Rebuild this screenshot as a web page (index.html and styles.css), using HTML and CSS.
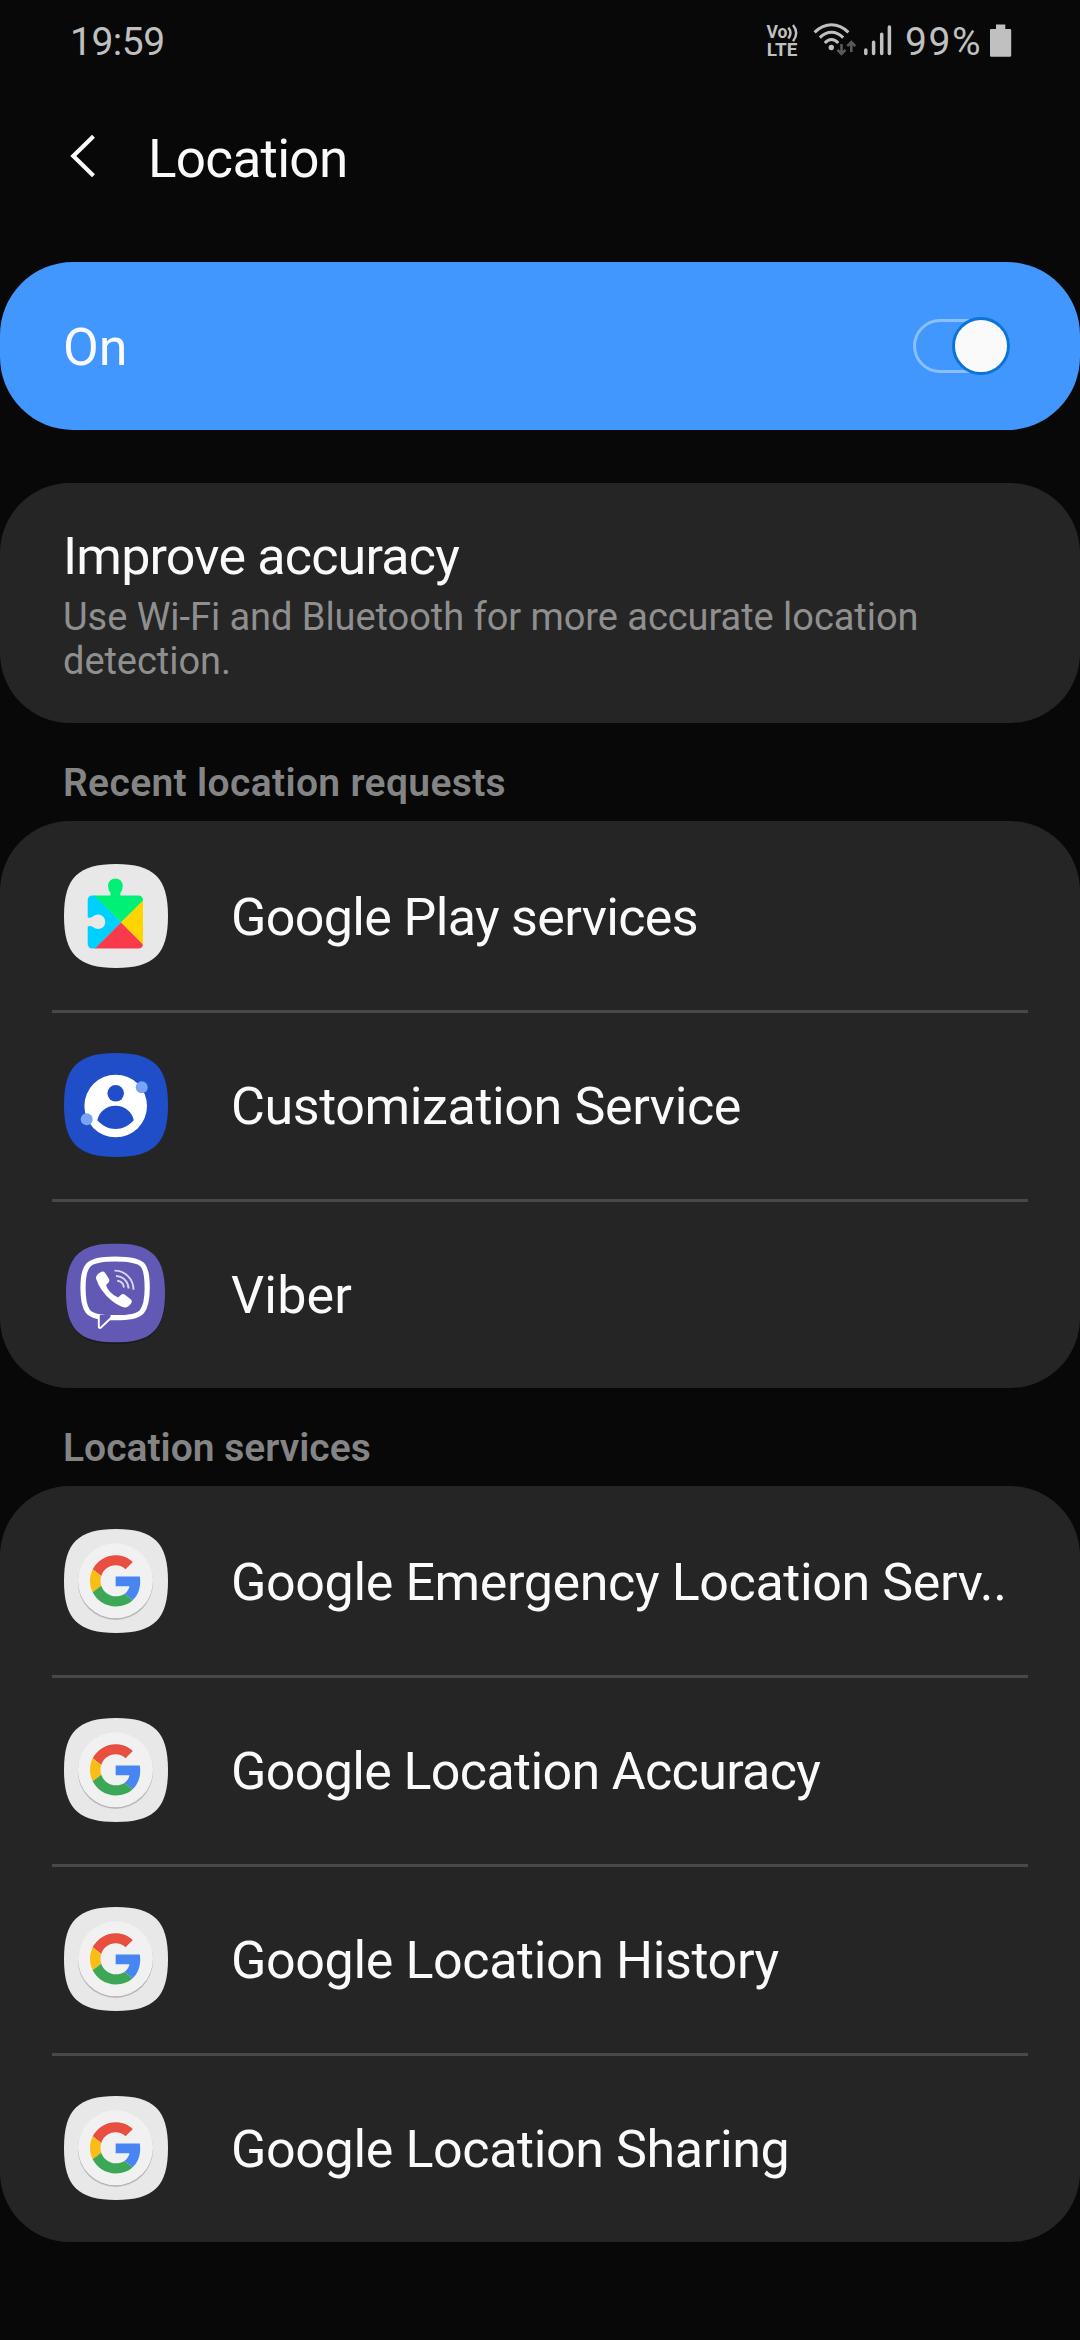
FILE: index.html
```html
<!DOCTYPE html>
<html lang="en">
<head>
<meta charset="utf-8">
<title>Location</title>
<link rel="stylesheet" href="styles.css">
</head>
<body>
<svg class="defs" width="0" height="0" aria-hidden="true">
  <symbol id="squircle" viewBox="0 0 104 104">
    <path d="M52 0C90 0 104 14 104 52S90 104 52 104 0 90 0 52 14 0 52 0z"/>
  </symbol>
  <symbol id="google" viewBox="0 0 104 104">
    <use href="#squircle" fill="#e8e8e8"/>
    <circle cx="51.5" cy="53.6" r="37.6" fill="#000" opacity=".1"/>
    <circle cx="51.5" cy="52.8" r="37.6" fill="#000" opacity=".16"/>
    <circle cx="51.5" cy="51.8" r="37.5" fill="#f1f1f1"/>
    <g transform="translate(26 26.2) scale(1.069)">
      <path fill="#e94f41" d="M24 9.5c3.54 0 6.71 1.22 9.21 3.6l6.85-6.85C35.9 2.38 30.47 0 24 0 14.62 0 6.51 5.38 2.56 13.22l7.98 6.19C12.43 13.72 17.74 9.5 24 9.5z"/>
      <path fill="#4786f2" d="M46.98 24.55c0-1.57-.15-3.09-.38-4.55H24v9.02h12.94c-.58 2.96-2.26 5.48-4.78 7.18l7.73 6c4.51-4.18 7.09-10.36 7.09-17.65z"/>
      <path fill="#f9bd15" d="M10.53 28.59c-.48-1.45-.76-2.99-.76-4.59s.27-3.14.76-4.59l-7.98-6.19C.92 16.46 0 20.12 0 24c0 3.88.92 7.54 2.56 10.78l7.97-6.19z"/>
      <path fill="#3ba757" d="M24 48c6.48 0 11.93-2.13 15.89-5.81l-7.73-6c-2.15 1.45-4.92 2.3-8.16 2.3-6.26 0-11.57-4.22-13.47-9.91l-7.98 6.19C6.51 42.62 14.62 48 24 48z"/>
    </g>
  </symbol>
</svg>

<header class="status">
  <span class="clock">19:59</span>
  <div class="indicators">
    <svg class="signals" width="132" height="40" viewBox="762 20 132 40">
      <g class="volte">
        <text x="766.5" y="38.3" font-size="17.5" textLength="21" lengthAdjust="spacingAndGlyphs">Vo</text>
        <text x="766.8" y="56" font-size="18" textLength="30.5" lengthAdjust="spacingAndGlyphs">LTE</text>
      </g>
      <g fill="none" stroke="#c0c0c0" stroke-width="2.4">
        <path d="M788.3 27.6q4.4 5.2 0 10.8M793 25q6.4 8 0 16.2"/>
      </g>
      <g fill="none" stroke="#c0c0c0" stroke-width="3">
        <path d="M814.6 32.3Q822.5 24.8 831.5 24.8T848.4 32.3M819.8 37.6Q825.3 32.3 831.5 32.3T843.2 37.6M824.8 43Q828 39.5 831.5 39.5T838.3 43"/>
      </g>
      <circle cx="831.3" cy="47.5" r="2.7" fill="#c0c0c0"/>
      <path d="M841.5 44v9M837.5 49.8l4 4 4-4M851.3 52v-9M847.3 46.2l4-4 4 4" fill="none" stroke="#5a5a5a" stroke-width="2.6"/>
      <path d="M865.8 50v3.6M873.6 42.3v11.3M881.7 34.2v19.4M889.4 27v26.6" stroke="#c0c0c0" stroke-width="3.5" stroke-linecap="round"/>
    </svg>
    <span class="percent">99%</span>
    <svg width="22" height="40" viewBox="990 20 22 40">
      <path d="M996 24.5h9.3V29H1010q1.2 0 1.2 1.2V55.5q0 1.2-1.2 1.2H991.2Q990 56.7 990 55.5V30.2Q990 29 991.2 29H996z" fill="#c0c0c0"/>
    </svg>
  </div>
</header>

<div class="toolbar">
  <svg width="30" height="48" viewBox="0 0 30 48"><path d="M25.5 4.3L5.3 24 25.5 43.7" fill="none" stroke="#fafafa" stroke-width="4.2"/></svg>
  <h1>Location</h1>
</div>

<main>
  <section class="master">
    <span class="label">On</span>
    <span class="switch"><span class="thumb"></span></span>
  </section>

  <section class="card accuracy">
    <h2>Improve accuracy</h2>
    <p>Use Wi-Fi and Bluetooth for more accurate location detection.</p>
  </section>

  <h3 class="wide">Recent location requests</h3>
  <section class="card">
    <div class="row">
      <svg class="icon" viewBox="0 0 104 104">
        <use href="#squircle" fill="#e8e8e8"/>
        <clipPath id="body"><rect x="23.7" y="31.5" width="55.3" height="53" rx="4.5"/></clipPath>
        <path fill="#00f076" d="M46.5 33V29Q44 26 44 21.8a7.4 7.4 0 0 1 14.8 0Q58.8 26 56.3 29V33z"/>
        <g clip-path="url(#body)">
          <path fill="#00d0ff" d="M23 31h8l26 27.5L31 85h-8z"/>
          <path fill="#00f076" d="M30 31h50v5L57 58.5z"/>
          <path fill="#ffd500" d="M80 35.5v46L57 58.5z"/>
          <path fill="#f93a4a" d="M57 58.5L80 81.5V85H30.5z"/>
        </g>
        <path fill="#e8e8e8" d="M23 53.2Q26 54.5 29 52.5a7.3 7.3 0 1 1 0 10.6Q26 61 23 62.8z"/>
      </svg>
      <span class="label">Google Play services</span>
    </div>
    <div class="row">
      <svg class="icon" viewBox="0 0 104 104">
        <use href="#squircle" fill="#1f4ec8"/>
        <circle cx="51.7" cy="53" r="31.3" fill="#fff"/>
        <circle cx="51.7" cy="40.3" r="8.3" fill="#1f4ec8"/>
        <path d="M33.3 67.3C35 59 42 52.7 51.5 52.7S68 59 69.8 67.3C64.5 73 58.5 76 51.5 76S38.5 73 33.3 67.3z" fill="#1f4ec8"/>
        <circle cx="77.7" cy="34.3" r="6" fill="#79a3f5"/>
        <circle cx="22.7" cy="66.3" r="6" fill="#79a3f5"/>
      </svg>
      <span class="label loose">Customization Service</span>
    </div>
    <div class="row">
      <svg class="icon" viewBox="0 0 104 104">
        <use href="#squircle" x="2" y="3" width="99" height="99" fill="#1b1b1b"/>
        <use href="#squircle" x="2" y="1.5" width="99" height="99" fill="#6259b5"/>
        <path d="M51 17C66 17 75 18.5 79 23.5 82.5 28 83.2 36 83.2 46S82 64.5 78 69.5C74 74.5 65 75.7 51 75.7S28 74.5 24 69.5 19 56 19 46 20 28 24 23.5C28 18.5 37 17 51 17z" fill="none" stroke="#fff" stroke-width="5.2"/>
        <path d="M34.8 73V84.5Q35 87 37 85.5L46.5 76V73z" fill="#6259b5"/>
        <path d="M34.8 73V84.5Q35 87 37 85.5L47.5 75.5" fill="none" stroke="#fff" stroke-width="1.9"/>
        <path d="M37.500 29.800Q39.500 29 41 30.800L45 37Q46 39 44.500 40.500L42 43Q44.500 51 54 55.500L57.500 52.500Q59 51.700 60.500 52.500L67 57.500Q68.500 59 67.500 60.700 64.500 65.500 61 65.500 55 64.500 47.500 58.500 36 49 32 36.500 31.500 33 37.500 29.800z" fill="#fff"/>
        <path d="M50.500 28.600C61 28.500 69.500 37 69.500 47.800M52 34C59.500 34.500 64.200 39.500 64.600 46.500M53.200 38.800C57.300 39.300 59.500 41.800 60 45.500" fill="none" stroke="#d9d6f0" stroke-width="1.900"/>
      </svg>
      <span class="label viber">Viber</span>
    </div>
  </section>

  <h3>Location services</h3>
  <section class="card">
    <div class="row"><svg class="icon"><use href="#google"/></svg><span class="label loose">Google Emergency Location Serv..</span></div>
    <div class="row"><svg class="icon"><use href="#google"/></svg><span class="label">Google Location Accuracy</span></div>
    <div class="row"><svg class="icon"><use href="#google"/></svg><span class="label loose">Google Location History</span></div>
    <div class="row"><svg class="icon"><use href="#google"/></svg><span class="label loose">Google Location Sharing</span></div>
  </section>
</main>
</body>
</html>
```
FILE: styles.css
```css
* {
  box-sizing: border-box;
}

body {
  margin: 0;
  width: 1080px;
  height: 2340px;
  overflow: hidden;
  background: #080808;
  color: #fafafa;
  font-family: Roboto, "Noto Sans", sans-serif;
}

h1, h2, h3, p {
  margin: 0;
  font-weight: 400;
}

svg {
  display: block;
  flex: none;
}

.defs {
  position: absolute;
}

.status {
  display: flex;
  justify-content: space-between;
  height: 80px;
  padding: 20px 68px 0 70px;
  color: #c0c0c0;
  font-size: 39px;
  line-height: 45px;
}

.clock {
  letter-spacing: -0.5px;
}

.indicators {
  display: flex;
}

.percent {
  width: 85px;
  margin-left: 11px;
  letter-spacing: 1.6px;
}

.volte {
  fill: #c0c0c0;
  font-family: Roboto, sans-serif;
  font-weight: 700;
}

.toolbar {
  display: flex;
  align-items: center;
  height: 152px;
  padding: 0 68px;
}

.toolbar h1 {
  margin-left: 50px;
  padding-top: 6px;
  font-size: 53px;
  line-height: 60px;
  letter-spacing: -0.7px;
}

main {
  padding-top: 30px;
}

.master {
  display: flex;
  align-items: center;
  justify-content: space-between;
  height: 168px;
  padding: 0 70px 0 63px;
  border-radius: 73px;
  background: #4297ff;
}

.label {
  padding-top: 4px;
  font-size: 52px;
  line-height: 60px;
  letter-spacing: -0.65px;
  white-space: nowrap;
}

.label.loose {
  letter-spacing: -0.38px;
}

.label.viber {
  letter-spacing: 0.2px;
}

.master .label {
  letter-spacing: 0;
}

.switch {
  display: flex;
  align-items: center;
  justify-content: flex-end;
  width: 97px;
  height: 54px;
  border: 3px solid #8ac0ff;
  border-right: 0;
  border-radius: 27px;
}

.thumb {
  flex: none;
  width: 58px;
  height: 58px;
  border: 3px solid #0b74d8;
  border-radius: 50%;
  background: #fafafa;
}

.card {
  border-radius: 70px;
  background: #252525;
}

.accuracy {
  height: 240px;
  margin-top: 53px;
  padding: 44px 62px 0 63px;
}

.accuracy h2 {
  margin-bottom: 8px;
  font-size: 52px;
  line-height: 60px;
  letter-spacing: -0.8px;
}

.accuracy p {
  color: #8f8f8f;
  font-size: 38px;
  line-height: 44px;
  letter-spacing: -0.05px;
}

h3 {
  height: 98px;
  padding: 38px 63px 0;
  color: #848484;
  font-size: 39px;
  font-weight: 600;
  line-height: 44px;
}

.wide {
  letter-spacing: 0.35px;
}

.row {
  position: relative;
  display: flex;
  align-items: center;
  height: 189px;
  padding-left: 64px;
}

.row + .row::before {
  position: absolute;
  top: 0;
  left: 52px;
  width: 976px;
  height: 3px;
  background: #484848;
  content: "";
}

.icon {
  width: 104px;
  height: 104px;
  margin-right: 63px;
}
```
